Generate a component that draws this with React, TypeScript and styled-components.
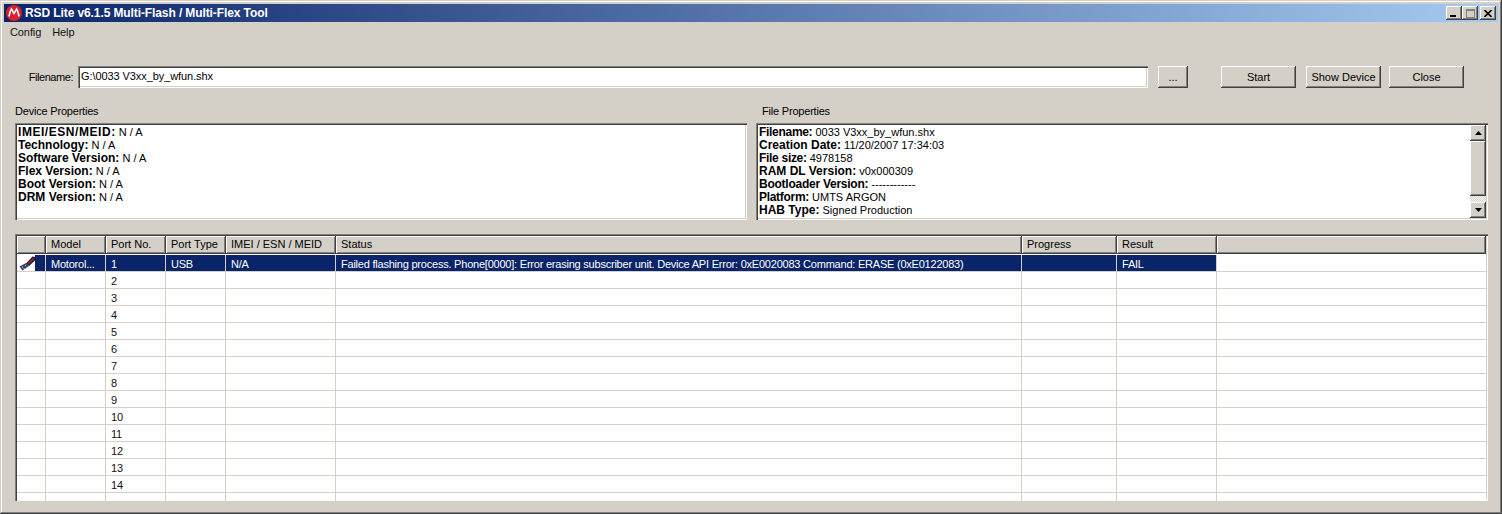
import styled, { createGlobalStyle, css } from "styled-components"

const GlobalStyle = createGlobalStyle`
  html, body {
    margin: 0;
    padding: 0;
    height: 100%;
    overflow: hidden;
    background: #d4d0c8;
  }
  * {
    box-sizing: border-box;
  }
`

const raised = css`
  box-shadow: inset -1px -1px 0 #404040, inset 1px 1px 0 #fff, inset -2px -2px 0 #808080;
`

const sunken = css`
  box-shadow: inset 1px 1px 0 #808080, inset 2px 2px 0 #404040, inset -1px -1px 0 #fff, inset -2px -2px 0 #d4d0c8;
`

const COLUMNS = "29px 60px 60px 60px 110px 686px 95px 100px 1fr"

const Window = styled.div`
  width: 1502px;
  height: 514px;
  padding: 4px;
  background: #d4d0c8;
  box-shadow: inset -1px -1px 0 #404040, inset 1px 1px 0 #d4d0c8, inset -2px -2px 0 #808080, inset 2px 2px 0 #fff;
  font-family: "Liberation Sans", Arial, sans-serif;
  font-size: 11px;
  color: #000;
  display: flex;
  flex-direction: column;
`

const TitleBar = styled.div`
  height: 18px;
  flex: none;
  display: flex;
  align-items: center;
  padding: 0 2px;
  gap: 3px;
  background: linear-gradient(90deg, #0a246a, #a6caf0);
`

const TitleText = styled.div`
  flex: 1;
  color: #fff;
  font-size: 12px;
  font-weight: bold;
  letter-spacing: -0.1px;
  white-space: nowrap;
`

const WinButtons = styled.div`
  display: flex;
`

const WinButton = styled.div<{ $gap?: number }>`
  ${raised}
  width: 16px;
  height: 14px;
  margin-left: ${({ $gap }) => $gap ?? 0}px;
  background: #d4d0c8;
  display: flex;
  align-items: center;
  justify-content: center;
`

const MenuBar = styled.div`
  height: 20px;
  flex: none;
  display: flex;
  align-items: center;
  gap: 11px;
  padding-left: 6px;
  color: #111;
  letter-spacing: -0.1px;
`

const FileRow = styled.div`
  height: 22px;
  margin-top: 24px;
  flex: none;
  display: flex;
  align-items: center;
`

const FileLabel = styled.div`
  width: 74px;
  padding: 0 5px 0 0;
  text-align: right;
  letter-spacing: -0.45px;
`

const FileInput = styled.div`
  ${sunken}
  width: 1070px;
  height: 22px;
  background: #fff;
  display: flex;
  align-items: center;
  padding: 0 0 2px 3px;
  letter-spacing: -0.08px;
`

const PushButton = styled.div<{ $width: number; $gap: number }>`
  ${raised}
  width: ${({ $width }) => $width}px;
  margin-left: ${({ $gap }) => $gap}px;
  height: 22px;
  flex: none;
  display: flex;
  align-items: center;
  justify-content: center;
  background: #d4d0c8;
`

const PropsSection = styled.div`
  display: flex;
  gap: 9px;
  margin: 16px 0 0 11px;
  flex: none;
`

const PropsGroup = styled.div<{ $width: number }>`
  width: ${({ $width }) => $width}px;
`

const PropsLabel = styled.div<{ $indent?: number }>`
  height: 13px;
  line-height: 15px;
  margin-bottom: 6px;
  padding-left: ${({ $indent }) => $indent ?? 0}px;
  letter-spacing: -0.2px;
`

const PropsBox = styled.div`
  ${sunken}
  height: 97px;
  background: #fff;
  padding: 3px 3px;
  display: flex;
  justify-content: space-between;
  overflow: hidden;
`

const PropsLine = styled.div<{ $spread?: number }>`
  height: 13px;
  line-height: 13px;
  white-space: nowrap;
  font-size: 11px;

  b {
    font-size: 12px;
    letter-spacing: ${({ $spread }) => $spread ?? 0}px;
  }
`

const ScrollBar = styled.div`
  width: 16px;
  flex: none;
  margin: -1px -1px -1px 0;
  display: flex;
  flex-direction: column;
`

const ScrollArrow = styled.div`
  ${raised}
  height: 16px;
  flex: none;
  background: #d4d0c8;
  display: flex;
  align-items: center;
  justify-content: center;
`

const ScrollThumb = styled.div`
  ${raised}
  height: 55px;
  flex: none;
  background: #d4d0c8;
`

const ScrollTrack = styled.div`
  flex: 1;
  background: repeating-conic-gradient(#fff 0 25%, #d4d0c8 0 50%) 0 0 / 2px 2px;
`

const Table = styled.div`
  ${sunken}
  height: 267px;
  margin: 14px 0 0 11px;
  width: 1473px;
  padding: 2px;
  background: #fff;
  overflow: hidden;
  flex: none;
`

const HeaderRow = styled.div`
  display: grid;
  grid-template-columns: ${COLUMNS};
  height: 18px;
  margin-bottom: 1px;
`

const HeaderCell = styled.div`
  ${raised}
  background: #d4d0c8;
  padding-left: 5px;
  line-height: 17px;
  white-space: nowrap;
`

const Row = styled.div`
  display: grid;
  grid-template-columns: ${COLUMNS};
  height: 17px;
  border-bottom: 1px solid #d4d0c8;
`

const Cell = styled.div<{ $selected?: boolean }>`
  padding: 1px 0 0 5px;
  line-height: 16px;
  letter-spacing: -0.22px;
  white-space: nowrap;
  overflow: hidden;
  border-right: 1px solid #d4d0c8;
  background: ${({ $selected }) => ($selected ? "#0a246a" : "#fff")};
  color: ${({ $selected }) => ($selected ? "#fff" : "#111")};
`

const FillerCell = styled.div`
  background: #fff;
`

const IconCell = styled.div<{ $selected?: boolean }>`
  border-right: 1px solid #d4d0c8;
  background: ${({ $selected }) => ($selected ? "linear-gradient(90deg, #fff 18px, #0a246a 18px)" : "#fff")};
  padding-left: 2px;
  display: flex;
  align-items: center;
`

const HEADERS = ["", "Model", "Port No.", "Port Type", "IMEI / ESN / MEID", "Status", "Progress", "Result", ""]

const DEVICE_PROPS: [string, string, number?][] = [
  ["IMEI/ESN/MEID:", "N / A", 0.55],
  ["Technology:", "N / A"],
  ["Software Version:", "N / A"],
  ["Flex Version:", "N / A"],
  ["Boot Version:", "N / A"],
  ["DRM Version:", "N / A"],
]

const FILE_PROPS: [string, string, number?][] = [
  ["Filename:", "0033 V3xx_by_wfun.shx", -0.3],
  ["Creation Date:", "11/20/2007 17:34:03"],
  ["File size:", "4978158", -0.3],
  ["RAM DL Version:", "v0x000309"],
  ["Bootloader Version:", "------------", -0.25],
  ["Platform:", "UMTS ARGON", -0.3],
  ["HAB Type:", "Signed Production"],
]

const STATUS =
  "Failed flashing process. Phone[0000]: Error erasing subscriber unit. Device API Error: 0xE0020083 Command: ERASE (0xE0122083)"

function MotoLogo() {
  return (
    <svg width="16" height="16" viewBox="0 0 16 16">
      <circle cx="8" cy="8" r="8" fill="#d8202c" />
      <path
        d="M3 11.5 C3.6 8 4.4 5.5 5.4 4 L8 8.5 L10.6 4 C11.6 5.5 12.4 8 13 11.5"
        fill="none"
        stroke="#fff"
        strokeWidth="1.5"
      />
    </svg>
  )
}

function UsbPlug() {
  return (
    <svg width="17" height="15" viewBox="0 0 17 15">
      <path d="M7 7.5 L13.5 0.5 L16.5 1 L16.5 4 L10 10 Z" fill="#1c1c28" />
      <path d="M8.5 7.5 L14 2 L15.5 2.5 L10 8 Z" fill="#b01f48" />
      <path d="M0.5 10.5 L7 7 L10 10 L3.5 14.5 Z" fill="#3a4468" />
      <path d="M3 11 h1 M6 9.5 h1 M4.5 12.5 h1" stroke="#c0c4d8" strokeWidth="1" />
    </svg>
  )
}

function Arrow({ up }: { up?: boolean }) {
  return (
    <svg width="7" height="4" viewBox="0 0 7 4">
      <path d={up ? "M3.5 0 L7 4 L0 4 Z" : "M0 0 L7 0 L3.5 4 Z"} fill="#000" />
    </svg>
  )
}

function PropLines({ items }: { items: [string, string, number?][] }) {
  return (
    <div>
      {items.map(([name, value, spread]) => (
        <PropsLine key={name} $spread={spread}>
          <b>{name}</b> {value}
        </PropsLine>
      ))}
    </div>
  )
}

export default function App() {
  const rows = Array.from({ length: 15 }, (_, i) => i + 1)

  return (
    <Window>
      <GlobalStyle />
      <TitleBar>
        <MotoLogo />
        <TitleText>RSD Lite v6.1.5 Multi-Flash / Multi-Flex Tool</TitleText>
        <WinButtons>
          <WinButton>
            <svg width="8" height="8" viewBox="0 0 8 8">
              <rect x="0" y="6" width="6" height="2" fill="#000" />
            </svg>
          </WinButton>
          <WinButton>
            <svg width="9" height="9" viewBox="0 0 9 9">
              <rect x="0.5" y="0.5" width="8" height="8" fill="none" stroke="#808080" />
              <rect x="0" y="0" width="9" height="2" fill="#808080" />
            </svg>
          </WinButton>
          <WinButton $gap={2}>
            <svg width="8" height="7" viewBox="0 0 8 7">
              <path d="M0.5 0 L7.5 7 M7.5 0 L0.5 7" stroke="#000" strokeWidth="1.6" />
            </svg>
          </WinButton>
        </WinButtons>
      </TitleBar>

      <MenuBar>
        <span>Config</span>
        <span>Help</span>
      </MenuBar>

      <FileRow>
        <FileLabel>Filename:</FileLabel>
        <FileInput>G:\0033 V3xx_by_wfun.shx</FileInput>
        <PushButton $width={30} $gap={10}>...</PushButton>
        <PushButton $width={75} $gap={33}>Start</PushButton>
        <PushButton $width={75} $gap={10}>Show Device</PushButton>
        <PushButton $width={75} $gap={8}>Close</PushButton>
      </FileRow>

      <PropsSection>
        <PropsGroup $width={732}>
          <PropsLabel>Device Properties</PropsLabel>
          <PropsBox>
            <PropLines items={DEVICE_PROPS} />
          </PropsBox>
        </PropsGroup>
        <PropsGroup $width={732}>
          <PropsLabel $indent={6}>File Properties</PropsLabel>
          <PropsBox>
            <PropLines items={FILE_PROPS} />
            <ScrollBar>
              <ScrollArrow><Arrow up /></ScrollArrow>
              <ScrollThumb />
              <ScrollTrack />
              <ScrollArrow><Arrow /></ScrollArrow>
            </ScrollBar>
          </PropsBox>
        </PropsGroup>
      </PropsSection>

      <Table>
        <HeaderRow>
          {HEADERS.map((h, i) => (
            <HeaderCell key={i}>{h}</HeaderCell>
          ))}
        </HeaderRow>
        {rows.map((n) => {
          const sel = n === 1
          return (
            <Row key={n}>
              <IconCell $selected={sel}>{sel && <UsbPlug />}</IconCell>
              <Cell $selected={sel}>{sel && "Motorol..."}</Cell>
              <Cell $selected={sel}>{n <= 14 && n}</Cell>
              <Cell $selected={sel}>{sel && "USB"}</Cell>
              <Cell $selected={sel}>{sel && "N/A"}</Cell>
              <Cell $selected={sel}>{sel && STATUS}</Cell>
              <Cell $selected={sel} />
              <Cell $selected={sel}>{sel && "FAIL"}</Cell>
              <FillerCell />
            </Row>
          )
        })}
      </Table>
    </Window>
  )
}
